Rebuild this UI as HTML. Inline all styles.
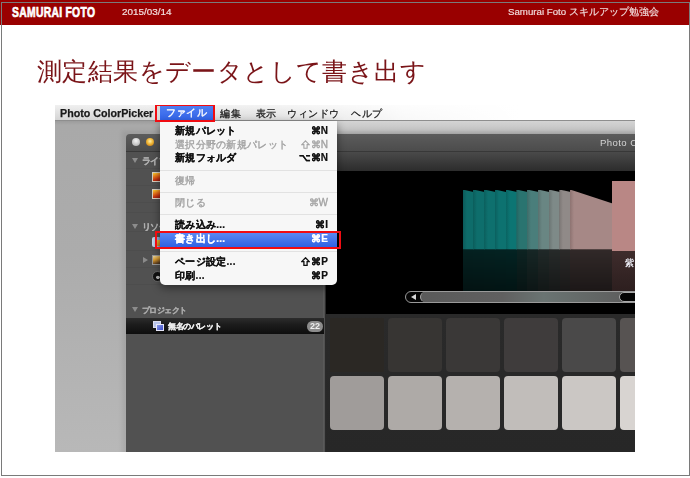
<!DOCTYPE html>
<html><head><meta charset="utf-8">
<style>
*{margin:0;padding:0;box-sizing:border-box}
html,body{width:690px;height:478px;overflow:hidden;background:#fff;font-family:"Liberation Sans",sans-serif;-webkit-font-smoothing:antialiased}
.a{position:absolute}
#hdr{left:0;top:0;width:690px;height:25px;background:#990000}
#frame{left:1px;top:2px;width:689px;height:474px;border:1px solid #7a7a7a}
#logo{left:11.5px;top:3.5px;font-size:14.6px;font-weight:bold;color:#fff;-webkit-text-stroke:0.7px #fff;letter-spacing:0.4px;transform:scaleX(0.71);transform-origin:0 0;white-space:nowrap;line-height:16px}
#date{will-change:transform;left:121.5px;top:5.8px;font-size:9.9px;color:#f2dede;-webkit-text-stroke:0.2px #f2dede;line-height:11px;white-space:nowrap}
#rt{will-change:transform;left:508px;top:6.3px;font-size:9.7px;color:#f2dede;-webkit-text-stroke:0.15px #f2dede;line-height:11px;white-space:nowrap}
#title{will-change:transform;left:37px;top:56px;letter-spacing:0.4px;font-size:25px;color:#7a1418;line-height:30px;white-space:nowrap}
#shot{left:55px;top:105px;width:580px;height:347px;overflow:hidden;background:#a9a9a9;will-change:transform}
#in{left:-55px;top:-105px;width:690px;height:478px}
#in div{position:absolute}
.mb{font-size:11px;color:#1a1a1a;-webkit-text-stroke:0.25px #1a1a1a;line-height:14px;white-space:nowrap;top:107px}
.mi{font-size:10px;line-height:12px;white-space:nowrap;left:175px;letter-spacing:0.3px}
.en{font-weight:bold;color:#111;-webkit-text-stroke:0.2px #111}
.dis{color:#a2a2a2;-webkit-text-stroke:0.35px #a2a2a2}
.sc{font-size:10px;line-height:12px;white-space:nowrap;right:362px;text-align:right}
.sep{left:160px;width:177px;height:1px;background:#e2e2e2}
.tri{width:0;height:0;border-left:3.3px solid transparent;border-right:3.3px solid transparent;border-top:5.5px solid #8c8c8c}
.sl{height:1px;background:#4d4d4d;left:126px;width:199px}
.ico{width:10px;height:10px;background:linear-gradient(160deg,#f8d030 0%,#e87018 40%,#c03010 70%,#8a1a10);border:1px solid #d8d0c0}
.sq{width:54px;height:54px;border-radius:4px}
</style></head><body>
<div id="hdr" class="a"></div>
<div id="logo" class="a">SAMURAI FOTO</div>
<div id="date" class="a">2015/03/14</div>
<div id="rt" class="a">Samurai Foto スキルアップ勉強会</div>
<div id="title" class="a">測定結果をデータとして書き出す</div>

<div id="shot" class="a"><div id="in" class="a">
  <!-- desktop -->
  <div style="left:55px;top:121px;width:580px;height:331px;background:linear-gradient(#9c9c9c,#a9a9a9 4px,#acacac 40%,#b8b8b8)"></div>
  <div style="left:337px;top:121px;width:298px;height:13px;background:linear-gradient(#d4d4d4,#c4c4c4 70%,#b0b0b0)"></div>
  <!-- menubar -->
  <div style="left:55px;top:105px;width:580px;height:16px;background:linear-gradient(#f0f0f0,#d2d2d2)"></div><div style="left:55px;top:105px;width:580px;height:16px;background:linear-gradient(90deg,rgba(255,255,255,0) 0,rgba(255,255,255,0.2) 35%,rgba(255,255,255,0.85) 60%,#fff 80%)"></div>
  <div style="left:55px;top:120px;width:580px;height:1px;background:#8e8e8e"></div>
  <div class="mb" style="left:60px;top:106px;font-weight:bold;font-size:10.7px">Photo ColorPicker</div>
  <div style="left:157px;top:106px;width:3px;height:15px;background:#d8d8d8"></div><div style="left:159.5px;top:106px;width:54px;height:15px;background:linear-gradient(#4f7ef2,#3062e8)"></div>
  <div class="mb" style="left:166px;top:106px;color:#fff;-webkit-text-stroke:0.35px #fff;font-size:10px;letter-spacing:0.2px">ファイル</div>
  <div class="mb" style="left:220px;top:106.5px;font-size:9.6px;letter-spacing:0.8px">編集</div>
  <div class="mb" style="left:255.5px;top:106.5px;font-size:9.6px;letter-spacing:0.8px">表示</div>
  <div class="mb" style="left:287px;top:106.5px;font-size:9.6px;letter-spacing:0.6px">ウィンドウ</div>
  <div class="mb" style="left:351px;top:106.5px;font-size:9.6px;letter-spacing:0.6px">ヘルプ</div>

  <!-- window -->
  <div style="left:122px;top:131px;width:520px;height:330px;background:rgba(0,0,0,0.07);filter:blur(2px)"></div>
  <div style="left:126px;top:134px;width:509px;height:17px;background:linear-gradient(#5c5c5c,#4c4c4c);border-radius:4px 0 0 0"></div>
  <div style="left:126px;top:151px;width:509px;height:1px;background:#383838"></div>
  <div style="left:132px;top:138px;width:8px;height:8px;border-radius:50%;background:radial-gradient(circle at 50% 35%,#f4f4f4,#bdbdbd 70%,#8a8a8a)"></div>
  <div style="left:146px;top:138px;width:8px;height:8px;border-radius:50%;background:radial-gradient(circle at 50% 40%,#fff0b0,#f0b838 45%,#d08a20 75%,#806020)"></div>
  <div style="left:600px;top:137px;font-size:9.6px;color:#d4d4d4;line-height:12px;white-space:nowrap;letter-spacing:0.4px">Photo ColorPicker</div>
  <!-- sidebar -->
  <div style="left:126px;top:152px;width:199px;height:300px;background:#515151"></div><div style="left:323px;top:152px;width:1px;height:300px;background:#5a5a5a"></div>
  <div style="left:325px;top:152px;width:1px;height:300px;background:#2a2a2a"></div>
  <div class="tri" style="left:132px;top:158px"></div>
  <div style="left:141.5px;top:155.5px;font-size:8.5px;font-weight:bold;color:#b0b0b0;-webkit-text-stroke:0.2px #b0b0b0;line-height:11px;white-space:nowrap;letter-spacing:-0.3px">ライブラリ</div>
  <div class="sl" style="top:168px"></div>
  <div class="ico" style="left:152px;top:172px"></div>
  <div class="sl" style="top:185px"></div>
  <div class="ico" style="left:152px;top:189px"></div>
  <div class="sl" style="top:202px"></div>
  <div class="tri" style="left:132px;top:224px"></div>
  <div style="left:141.5px;top:221.5px;font-size:8.5px;font-weight:bold;color:#b0b0b0;-webkit-text-stroke:0.2px #b0b0b0;line-height:11px;white-space:nowrap;letter-spacing:-0.3px">リソース</div><div class="sl" style="top:212px"></div><div class="sl" style="top:231px"></div><div class="sl" style="top:250px"></div><div class="sl" style="top:267px"></div><div class="sl" style="top:284px"></div>
  <div class="ico" style="left:152px;top:237px;width:9px;height:10px;border-radius:2px;background:linear-gradient(90deg,#c8dcf0,#6a9ad0);border:none"></div><div style="left:155px;top:240px;width:6px;height:6px;background:linear-gradient(135deg,#f0d040,#c07020)"></div>
  <div style="left:143px;top:257px;width:0;height:0;border-top:3px solid transparent;border-bottom:3px solid transparent;border-left:5px solid #8a8a8a"></div>
  <div class="ico" style="left:152px;top:255px;height:10px;background:linear-gradient(160deg,#e8d8a0,#d89a30 40%,#604020 80%,#303030);border:1px solid #999"></div>
  <div style="left:152px;top:271px;width:11px;height:11px;border-radius:50%;background:radial-gradient(circle at 55% 60%,#bbb 0,#bbb 1.5px,#111 2px);border:1px solid #666"></div>
  <div class="tri" style="left:132px;top:307px"></div>
  <div style="left:142px;top:305px;font-size:8px;font-weight:bold;color:#a9a9a9;-webkit-text-stroke:0.2px #a9a9a9;line-height:11px;white-space:nowrap;letter-spacing:-0.6px">プロジェクト</div>
  <div style="left:126px;top:318px;width:198px;height:16px;background:linear-gradient(#2c2c2c,#1c1c1c 40%,#0e0e0e)"></div>
  <div style="left:153px;top:321px;width:8px;height:7px;background:#b8c4ec;border:1px solid #dde"></div><div style="left:156px;top:324px;width:8px;height:7px;background:linear-gradient(135deg,#8a9ae8,#3a4ac8);border:1px solid #e8e8f8"></div>
  <div style="left:168px;top:321px;font-size:8px;font-weight:bold;color:#eeeeee;-webkit-text-stroke:0.2px #eee;line-height:11px;white-space:nowrap;letter-spacing:-0.4px">無名のパレット</div>
  <div style="left:307px;top:321px;width:16px;height:11px;border-radius:6px;background:#8c8c8c;color:#eee;font-size:9px;font-weight:bold;line-height:11px;text-align:center">22</div>
  
  <!-- content -->
  <div style="left:326px;top:152px;width:309px;height:19px;background:linear-gradient(#4a4a4a,#2c2c2c)"></div>
  <div style="left:326px;top:171px;width:309px;height:143px;background:#000"></div>
  <div style="left:326px;top:314px;width:309px;height:138px;background:linear-gradient(#2a2a2a,#272727)"></div>
  <!-- color strips -->
  <div style="left:462.5px;top:189.5px;width:11.1px;height:60px;background:linear-gradient(90deg,#0b5b5a,#0e6c6a 4px);clip-path:polygon(0 0,100% 2.5px,100% 100%,0 100%)"></div>
  <div style="left:473px;top:189.5px;width:11.6px;height:60px;background:linear-gradient(90deg,#0b5d5b,#0e6e6c 4px);clip-path:polygon(0 0,100% 2.5px,100% 100%,0 100%)"></div>
  <div style="left:484px;top:189.5px;width:11.6px;height:60px;background:linear-gradient(90deg,#0b5f5d,#0e706e 4px);clip-path:polygon(0 0,100% 2.5px,100% 100%,0 100%)"></div>
  <div style="left:495px;top:189.5px;width:11.1px;height:60px;background:linear-gradient(90deg,#0b605f,#0d7270 4px);clip-path:polygon(0 0,100% 2.5px,100% 100%,0 100%)"></div>
  <div style="left:505.5px;top:189.5px;width:11.5px;height:60px;background:linear-gradient(90deg,#0a6361,#0c7573 4px);clip-path:polygon(0 0,100% 2.5px,100% 100%,0 100%)"></div>
  <div style="left:516.4px;top:189.5px;width:11.2px;height:60px;background:linear-gradient(90deg,#23625f,#2a7470 4px);clip-path:polygon(0 0,100% 2.5px,100% 100%,0 100%)"></div>
  <div style="left:527px;top:189.5px;width:11.6px;height:60px;background:linear-gradient(90deg,#3e6b68,#4a7e7b 4px);clip-path:polygon(0 0,100% 2.5px,100% 100%,0 100%)"></div>
  <div style="left:538px;top:189.5px;width:11.3px;height:60px;background:linear-gradient(90deg,#59716f,#698683 4px);clip-path:polygon(0 0,100% 2.5px,100% 100%,0 100%)"></div>
  <div style="left:548.7px;top:189.5px;width:11.2px;height:60px;background:linear-gradient(90deg,#6b7573,#7e8a88 4px);clip-path:polygon(0 0,100% 2.5px,100% 100%,0 100%)"></div>
  <div style="left:559.3px;top:189.5px;width:11.3px;height:60px;background:linear-gradient(90deg,#7a7573,#908a88 4px);clip-path:polygon(0 0,100% 2.5px,100% 100%,0 100%)"></div>
  <div style="left:570px;top:189.5px;width:42.6px;height:60px;background:linear-gradient(90deg,#8d7371,#a68886 4px);clip-path:polygon(0 0,100% 14px,100% 100%,0 100%)"></div>
  <div style="left:462.5px;top:249.5px;width:150px;height:42px;background:linear-gradient(90deg,#0e6c6a 0.0px 10.5px,#0e6e6c 10.5px 21.5px,#0e706e 21.5px 32.5px,#0d7270 32.5px 43.0px,#0c7573 43.0px 53.9px,#2a7470 53.9px 64.5px,#4a7e7b 64.5px 75.5px,#698683 75.5px 86.2px,#7e8a88 86.2px 96.8px,#908a88 96.8px 107.5px,#a28785 107.5px 150px);-webkit-mask-image:linear-gradient(rgba(0,0,0,0.3),rgba(0,0,0,0.17))"></div>
  <div style="left:612px;top:181px;width:23.5px;height:69.5px;background:#b98785"></div>
  <div style="left:612px;top:250.5px;width:23.5px;height:42px;background:linear-gradient(#3e2c2c,#2c1e1e)"></div>
  <div style="left:625px;top:257.5px;font-size:9px;font-weight:bold;color:#e8e8f0;line-height:11px;white-space:nowrap">紫</div>
  <!-- scrollbar -->
  <div style="left:405px;top:291px;width:240px;height:12px;border:1px solid #9a9a9a;border-radius:6px;background:#050505"></div>
  <div style="left:411px;top:294px;width:0;height:0;border-top:3px solid transparent;border-bottom:3px solid transparent;border-right:5px solid #d8d8d8"></div>
  <div style="left:420px;top:292px;width:205px;height:10px;border-radius:5px 0 0 5px;background:linear-gradient(90deg,#5a5a5a,#606060 40%,#6a7472 60%,#5e5e5e);border-left:1px solid #aaa"></div>
  <div style="left:619px;top:292px;width:30px;height:10px;border-radius:5px;background:#050505;border:1px solid #aaa"></div>
  <!-- grid -->
  <div class="sq" style="left:330px;top:318px;background:#2b2824;border-radius:1px"></div>
  <div class="sq" style="left:388px;top:318px;background:#373533"></div>
  <div class="sq" style="left:446px;top:318px;background:#3a3837"></div>
  <div class="sq" style="left:504px;top:318px;background:#3f3c3c"></div>
  <div class="sq" style="left:562px;top:318px;background:#4a4949"></div>
  <div class="sq" style="left:620px;top:318px;background:#575352"></div>
  <div class="sq" style="left:330px;top:376px;background:#a09c9a"></div>
  <div class="sq" style="left:388px;top:376px;background:#aeaaa7"></div>
  <div class="sq" style="left:446px;top:376px;background:#b5b1ae"></div>
  <div class="sq" style="left:504px;top:376px;background:#c1bdba"></div>
  <div class="sq" style="left:562px;top:376px;background:#cbc7c4"></div>
  <div class="sq" style="left:620px;top:376px;background:#d8d4d1"></div>

  <!-- dropdown menu -->
  <div style="left:160px;top:121px;width:177px;height:164px;background:#f7f7f7;border-radius:0 0 5px 5px;box-shadow:0 3px 8px rgba(0,0,0,0.45)"></div>
  <div class="mi en" style="top:125px">新規パレット</div><div class="sc en" style="top:125px">⌘N</div>
  <div class="mi dis" style="top:139px">選択分野の新規パレット</div><div class="sc dis" style="top:139px">⌘N</div><svg style="position:absolute;left:301px;top:140px" width="9" height="9" viewBox="0 0 9 9"><path d="M4.5 0.8 L8.2 4.6 H6.1 V8.3 H2.9 V4.6 H0.8 Z" fill="none" stroke="#a4a4a4" stroke-width="1.1" stroke-linejoin="miter"/></svg>
  <div class="mi en" style="top:152px">新規フォルダ</div><div class="sc en" style="top:152px">⌥⌘N</div>
  <div class="sep" style="top:170px"></div>
  <div class="mi dis" style="top:175px">復帰</div>
  <div class="sep" style="top:192px"></div>
  <div class="mi dis" style="top:197px">閉じる</div><div class="sc dis" style="top:197px">⌘W</div>
  <div class="sep" style="top:214px"></div>
  <div class="mi en" style="top:219px">読み込み...</div><div class="sc en" style="top:219px">⌘I</div>
  <div style="left:160px;top:232px;width:177px;height:16px;background:linear-gradient(#5d8bf3,#2c5fe3)"></div>
  <div class="mi en" style="top:233px;color:#fff;-webkit-text-stroke:0.2px #fff">書き出し...</div><div class="sc en" style="top:233px;color:#fff;-webkit-text-stroke:0.2px #fff">⌘E</div>
  <div class="sep" style="top:251px"></div>
  <div class="mi en" style="top:256px">ページ設定...</div><div class="sc en" style="top:256px">⌘P</div><svg style="position:absolute;left:301px;top:257px" width="9" height="9" viewBox="0 0 9 9"><path d="M4.5 0.8 L8.2 4.6 H6.1 V8.3 H2.9 V4.6 H0.8 Z" fill="none" stroke="#111" stroke-width="1.3" stroke-linejoin="miter"/></svg>
  <div class="mi en" style="top:270px">印刷...</div><div class="sc en" style="top:270px">⌘P</div>
  <!-- red boxes -->
  <div style="left:155px;top:104px;width:60px;height:18px;border:2px solid #f00c12"></div>
  <div style="left:155px;top:231px;width:186px;height:18px;border:2px solid #f00c12"></div>
</div></div>
<div id="frame" class="a"></div>
</body></html>
